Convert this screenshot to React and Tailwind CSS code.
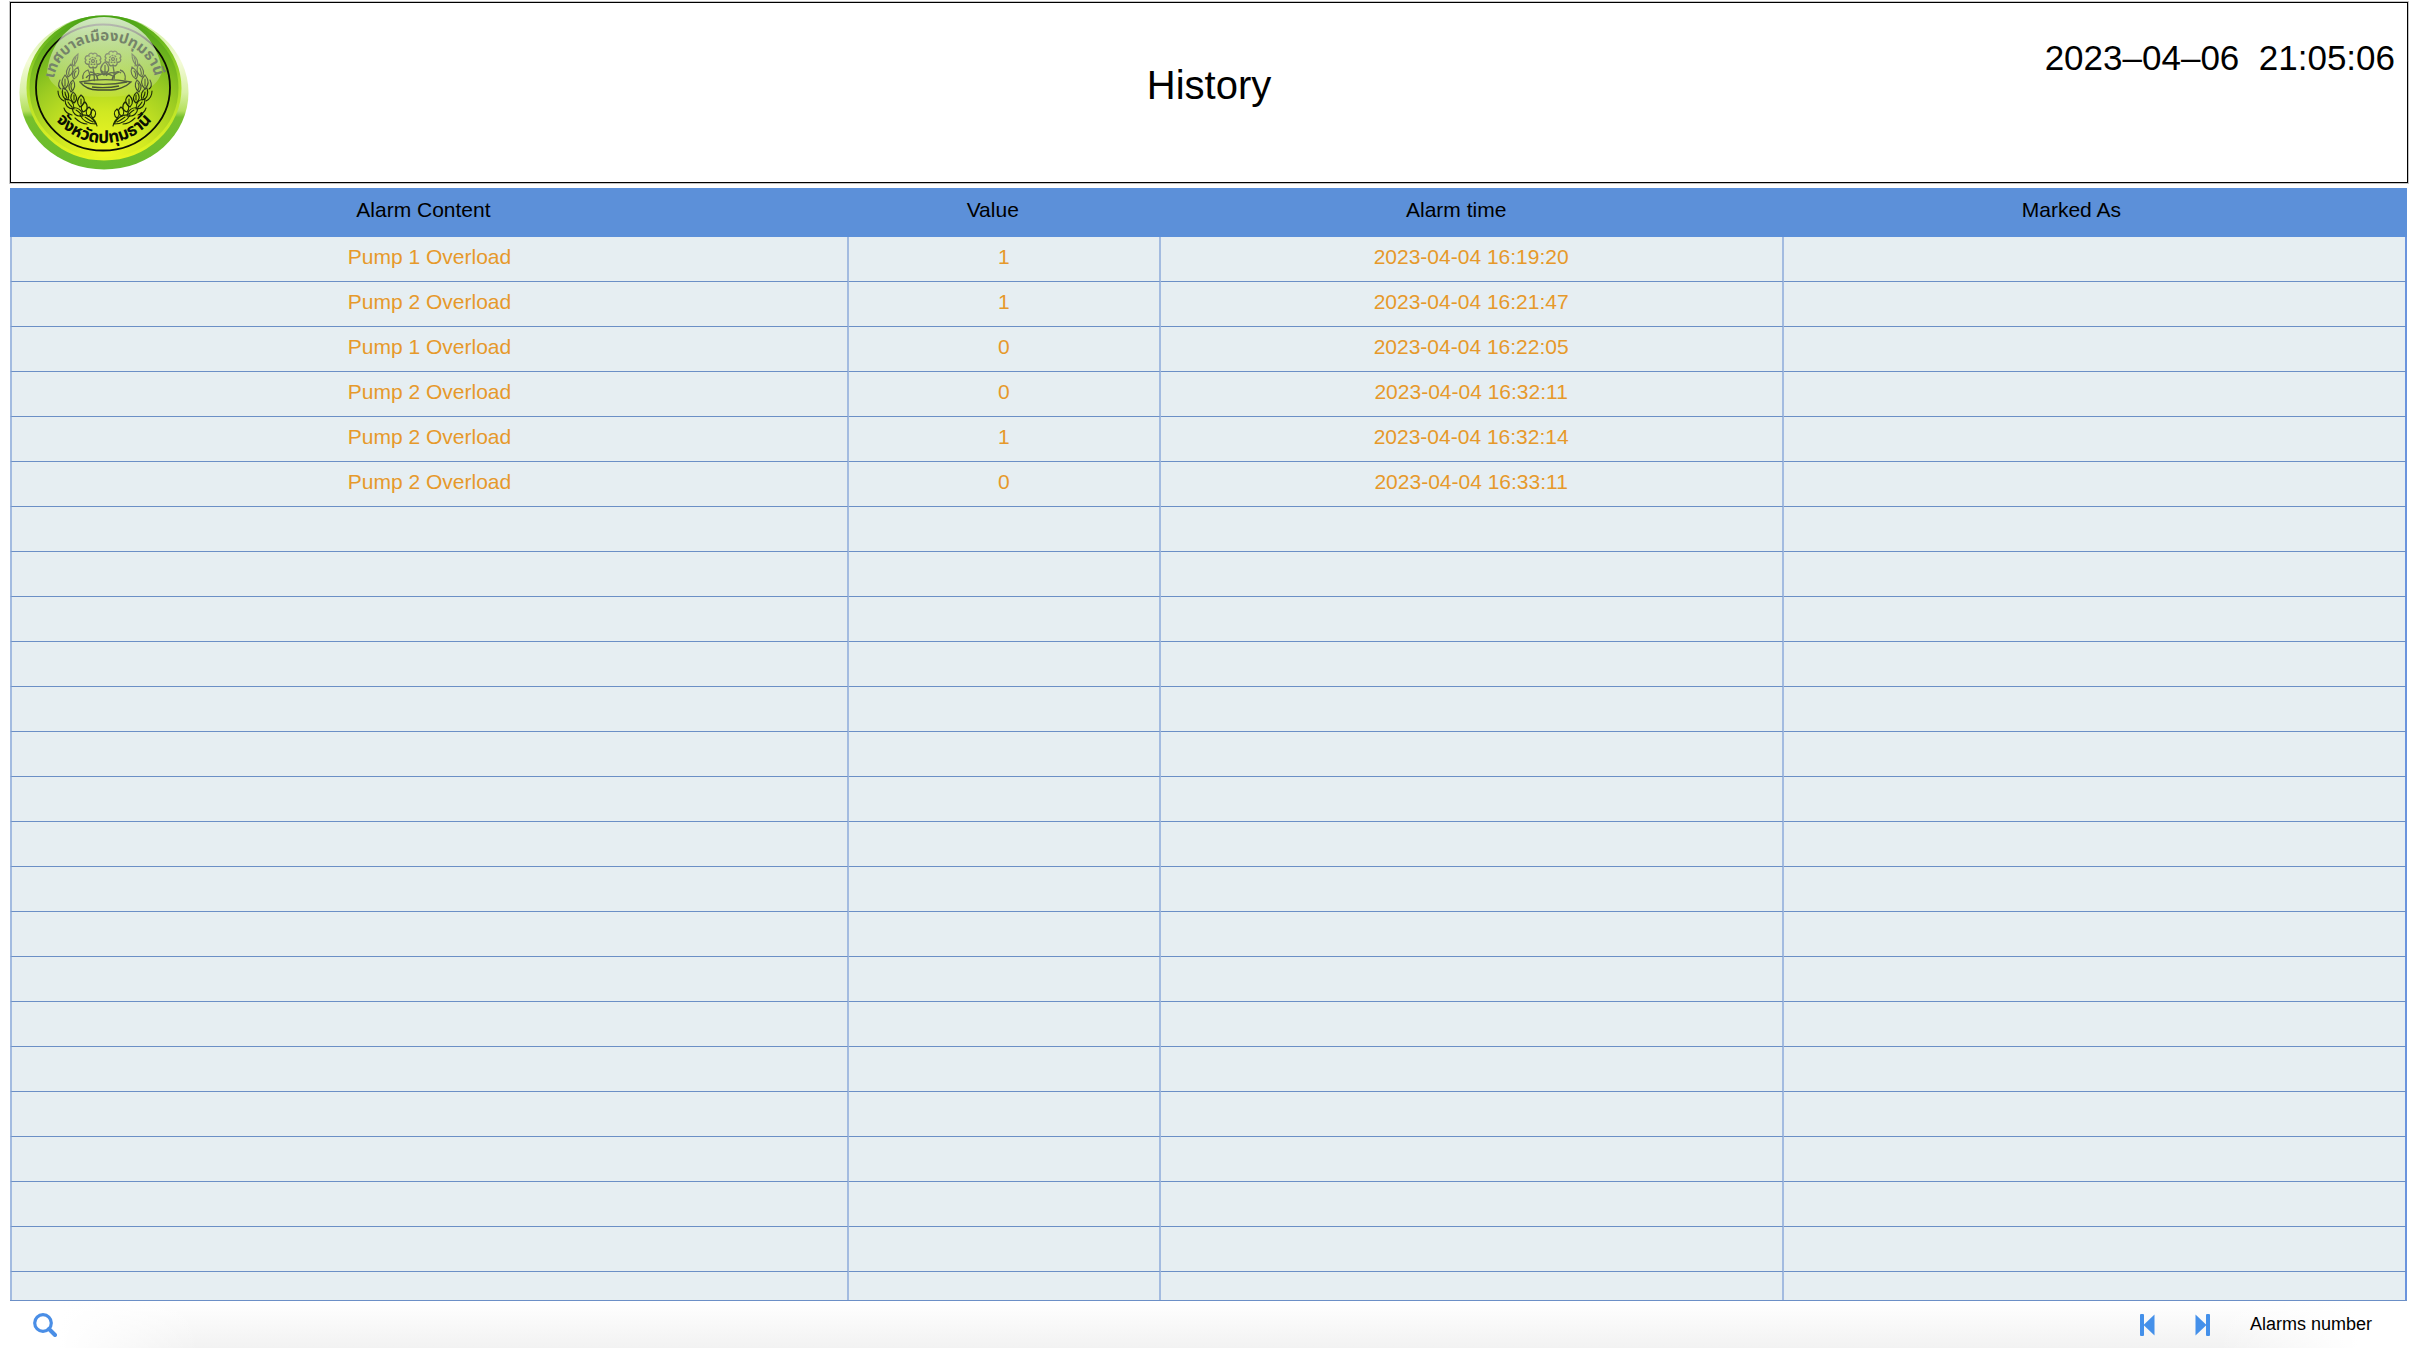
import React from 'react';

const alarms = [
  { content: 'Pump 1 Overload', value: '1', time: '2023-04-04 16:19:20', markedAs: '' },
  { content: 'Pump 2 Overload', value: '1', time: '2023-04-04 16:21:47', markedAs: '' },
  { content: 'Pump 1 Overload', value: '0', time: '2023-04-04 16:22:05', markedAs: '' },
  { content: 'Pump 2 Overload', value: '0', time: '2023-04-04 16:32:11', markedAs: '' },
  { content: 'Pump 2 Overload', value: '1', time: '2023-04-04 16:32:14', markedAs: '' },
  { content: 'Pump 2 Overload', value: '0', time: '2023-04-04 16:33:11', markedAs: '' },
];

// The grid always shows a full page of rows, empty ones included
const PAGE_ROWS = 24;
const rows = Array.from({ length: PAGE_ROWS }, (_, i) => alarms[i] || {});

// One half of the wreath around the bowl, mirrored for the other side
const WreathHalf = () => (
  <g fill="none" stroke="#1d2a08" strokeWidth="1.1" strokeLinecap="round">
    <path d="M59 39c-5 4-7 8-5 12 2-2 5-4 5-12z" />
    <path d="M57 42c-2 4-2 6-1 9" />
    <path d="M52 49c-4 4-6 9-3 13 4-2 7-7 3-13zM59 52c-5 3-7 8-4 12 4-2 6-7 4-12z" />
    <path d="M51 53c-1 3-2 5-1 7M57 56c-2 2-2 4-1 6" />
    <path d="M46 60c-4 5-4 10 0 14 4-4 5-9 0-14zM54 65c-5 4-5 8-2 12 4-3 5-8 2-12z" />
    <path d="M46 64v7M53 68c-2 3-1 5 0 7" />
    <path d="M44 73c-2 6 0 11 5 12 2-5 0-10-5-12zM54 77c-3 4-3 8 1 11 4-3 3-8-1-11z" />
    <path d="M46 77c0 3 1 4 2 6M55 80v5" />
    <path d="M46 84c0 6 3 10 9 10 0-6-3-10-9-10zM49 87c1 2 3 4 4 5" />
    <path d="M62 80c-4 4-5 8-1 12 5-3 6-8 1-12zM62 84v5" />
    <path d="M53 93c1 6 5 9 11 8-1-6-5-9-11-8zM57 95c2 1 4 3 5 4" />
    <path d="M66 87c-4 3-5 7-2 10 4-1 6-6 2-10zM70 92c-3 2-4 6-1 9 4-1 5-6 1-9z" />
    <path d="M61 100c3 6 8 9 16 9-3-6-8-10-16-9zM66 102c3 2 5 4 8 5" />
    <path d="M74 94c-3 3-3 6 0 9 3-2 4-6 0-9zM73 103c3 2 4 4 5 8" />
    <path d="M41 65c-2 4-2 7 1 9M39 76c0 5 2 8 6 10M45 93c1 4 4 6 8 7M56 103c3 3 7 6 12 6" />
  </g>
);

const Flower = ({ x, y }) => (
  <g transform={`translate(${x} ${y})`} fill="none" stroke="#1d2a08" strokeWidth="1.3">
    <path d="M0-7c2-2 5 0 4 2 3-1 5 2 3 4 2 2 0 5-3 4 1 3-2 5-4 3-2 2-5 0-4-3-3 1-5-2-3-4-2-2 0-5 3-4-1-2 2-4 4-2z" />
    <circle r="3.6" strokeDasharray="2 1" />
    <circle r="1.5" />
    <path d="M0 7c1 5 2 9 1 13M1 14c-4-1-6 0-8 3M1 14c3-2 5-2 7 0" />
  </g>
);

const Seal = () => (
  <svg viewBox="0 0 170 155" className="ml-2 mt-3 w-[170px] h-[155px]" role="img" aria-label="Pathum Thani">
    <defs>
      <linearGradient id="sealRim" x1="0" y1="0" x2="0" y2="1">
        <stop offset="0" stopColor="#55a81f" />
        <stop offset="0.08" stopColor="#d5efa4" />
        <stop offset="0.3" stopColor="#f4fbd8" />
        <stop offset="0.5" stopColor="#d8f0a4" />
        <stop offset="0.62" stopColor="#b4e05c" />
        <stop offset="0.66" stopColor="#76c02c" />
        <stop offset="1" stopColor="#66bb2e" />
      </linearGradient>
      <radialGradient id="sealFace" cx="0.5" cy="0.95" r="0.95">
        <stop offset="0" stopColor="#f0f822" />
        <stop offset="0.3" stopColor="#d0e822" />
        <stop offset="0.6" stopColor="#9ccc22" />
        <stop offset="1" stopColor="#4aa11a" />
      </radialGradient>
      <linearGradient id="sealEdge" x1="0" y1="0" x2="0" y2="1">
        <stop offset="0" stopColor="#4aa414" />
        <stop offset="0.45" stopColor="#a6da2c" />
        <stop offset="1" stopColor="#e8f520" />
      </linearGradient>
      <linearGradient id="sealGloss" x1="0" y1="0" x2="0" y2="1">
        <stop offset="0" stopColor="#ffffff" stopOpacity="0.75" />
        <stop offset="0.5" stopColor="#f0f8dc" stopOpacity="0.5" />
        <stop offset="1" stopColor="#ffffff" stopOpacity="0.08" />
      </linearGradient>
      <path id="sealTop" d="M35 68A50 41 0 0 1 136 66" />
      <path id="sealBottom" d="M31 96A61 60 0 0 0 139 96" />
    </defs>
    <ellipse cx="85" cy="77.5" rx="84.5" ry="77" fill="url(#sealRim)" />
    <ellipse cx="85" cy="73" rx="76" ry="71" fill="url(#sealFace)" stroke="url(#sealEdge)" strokeWidth="3" />
    <ellipse cx="84" cy="72.5" rx="67" ry="63" fill="none" stroke="#0a0f02" strokeWidth="1.8" />
    <WreathHalf />
    <g transform="translate(172 0) scale(-1 1)">
      <WreathHalf />
    </g>
    <Flower x={74} y={46} />
    <Flower x={94} y={44} />
    <g fill="none" stroke="#1d2a08" strokeWidth="1.3">
      <path d="M86 47c-5 4-6 9-1 13 6-3 6-9 1-13zM86 50v8M82 55c2 3 6 3 8 0" />
      <path d="M64 64c-1-5 2-8 5-9 2 3 2 7 1 10M71 57c4 0 7 3 8 8M101 55c4 1 6 5 5 10M100 57c-4 1-6 4-7 8M78 61c4-3 11-3 16 0" />
      <path d="M61 67c16-3 35-3 51 0-5 5-14 8-20 8H79c-8 0-14-3-18-8zM65 68c14 2 29 2 43-1M73 72c8 1 18 1 27-1" />
    </g>
    <path d="M28 57C32 22 58 2 85 2s54 20 58 55C138 70 128 82 84 82 42 82 31 70 28 57z" fill="url(#sealGloss)" />
    <text fontSize="15" fontWeight="700" fill="#75836a" fontFamily="'Noto Sans Thai', 'Noto Sans', sans-serif">
      <textPath href="#sealTop" startOffset="50%" textAnchor="middle">เทศบาลเมืองปทุมธานี</textPath>
    </text>
    <text fontSize="17" fontWeight="700" fill="#0a0f02" fontFamily="'Noto Sans Thai', 'Noto Sans', sans-serif">
      <textPath href="#sealBottom" startOffset="50%" textAnchor="middle">จังหวัดปทุมธานี</textPath>
    </text>
  </svg>
);

const SearchIcon = () => (
  <svg viewBox="0 0 24 24" className="w-6 h-6" fill="none" stroke="#4a8ee6">
    <circle cx="10" cy="10" r="8.3" strokeWidth="3.2" />
    <path d="M16 16l6 6" strokeWidth="4" strokeLinecap="round" />
  </svg>
);

const StepIcon = ({ className }) => (
  <svg viewBox="0 0 15 22" className={className} fill="#4490ea">
    <rect width="4" height="22" rx="1" />
    <path d="M3.5 11L14.5 0.5v21z" />
  </svg>
);

const Header = () => (
  <header className="grid grid-cols-[1fr_auto_1fr] h-[181px] shrink-0 border border-black outline outline-[#c4c4c4] bg-white">
    <Seal />
    <h1 className="self-center pb-4 text-[40px] leading-12">History</h1>
    <time className="justify-self-end pt-[35px] pr-3 text-[35px] leading-10 whitespace-pre">{'2023–04–06  21:05:06'}</time>
  </header>
);

const AlarmTable = () => (
  <div className="flex-1 min-h-0 overflow-hidden mt-[5px] mr-px border-b border-[#6b8fc6] bg-[#e6eef2]">
    <table className="w-full table-fixed border-separate border-spacing-0 text-[21px] leading-6 text-center">
      <colgroup>
        <col className="w-[35%]" />
        <col className="w-[13%]" />
        <col className="w-[26%]" />
        <col className="w-[26%]" />
      </colgroup>
      <thead className="bg-[#5c90d9] text-black">
        <tr className="h-[49px]">
          <th className="pb-1.5 pr-3 font-normal">Alarm Content</th>
          <th className="pb-1.5 pr-6 font-normal">Value</th>
          <th className="pb-1.5 pr-8 font-normal">Alarm time</th>
          <th className="pb-1.5 pr-12 font-normal">Marked As</th>
        </tr>
      </thead>
      <tbody className="text-[#e6992a]">
        {rows.map((row, idx) => (
          <tr className="h-[45px]" key={idx}>
            <td className="pb-1 border-b border-b-[#6b8fc6] border-x-2 border-x-[#a3bbe0]">{row.content}</td>
            <td className="pb-1 border-b border-b-[#6b8fc6] border-r-2 border-r-[#a3bbe0]">{row.value}</td>
            <td className="pb-1 border-b border-b-[#6b8fc6] border-r-2 border-r-[#a3bbe0]">{row.time}</td>
            <td className="pb-1 border-b border-b-[#6b8fc6] border-r-2 border-r-[#6a93dc]">{row.markedAs}</td>
          </tr>
        ))}
      </tbody>
    </table>
  </div>
);

const Footer = () => (
  <footer className="-mx-2.5 shrink-0 bg-linear-to-b from-white to-[#f2f2f2]">
    <div className="flex items-center h-[47px] pl-[33px] pr-[46px] bg-[linear-gradient(to_right,#fff_60px,#fff0_200px,#fff0_calc(100%_-_200px),#fff_calc(100%_-_60px))]">
      <button type="button" aria-label="Search" className="cursor-pointer">
        <SearchIcon />
      </button>
      <div className="flex items-center ml-auto">
        <button type="button" aria-label="Previous page" className="cursor-pointer">
          <StepIcon className="w-[15px] h-[22px]" />
        </button>
        <button type="button" aria-label="Next page" className="ml-10 cursor-pointer">
          <StepIcon className="w-[15px] h-[22px] rotate-180" />
        </button>
        <span className="ml-10 pb-0.5 text-lg leading-6 text-black">Alarms number</span>
      </div>
    </div>
  </footer>
);

const App = () => (
  <div className="flex flex-col h-screen bg-white px-2.5 pt-0.5 text-black font-['Helvetica_Neue','Liberation_Sans',Arial,sans-serif]">
    <Header />
    <AlarmTable />
    <Footer />
  </div>
);

export default App;
